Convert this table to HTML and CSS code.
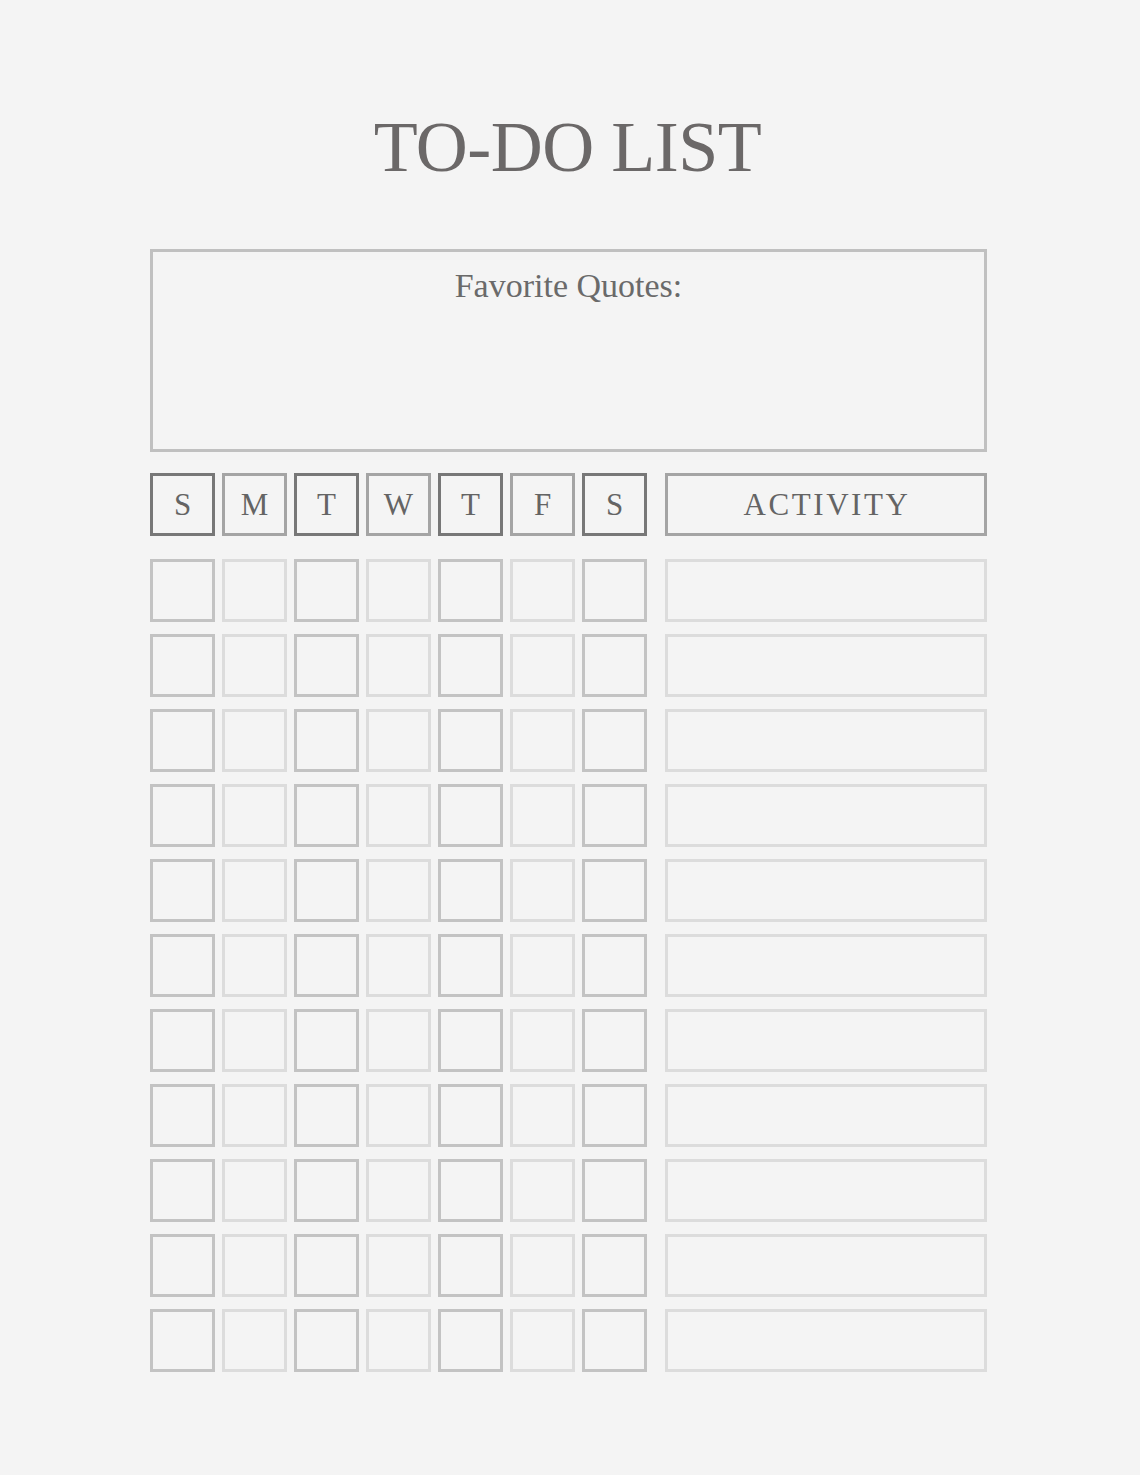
FILE: index.html
```html
<!DOCTYPE html>
<html lang="en">
<head>
<meta charset="utf-8">
<title>To-Do List</title>
<link rel="stylesheet" href="styles.css">
</head>
<body>
<main class="page">
  <h1 class="title">TO-DO LIST</h1>
  <section class="quotes">
    <h2 class="quotes-label">Favorite Quotes:</h2>
  </section>
  <div class="grid header">
    <div class="cell day dark">S</div>
    <div class="cell day mid">M</div>
    <div class="cell day dark">T</div>
    <div class="cell day mid">W</div>
    <div class="cell day dark">T</div>
    <div class="cell day mid">F</div>
    <div class="cell day dark">S</div>
    <div class="cell activity mid">ACTIVITY</div>
  </div>
  <div class="rows">
    <div class="grid row"><div class="cell a"></div><div class="cell b"></div><div class="cell a"></div><div class="cell b"></div><div class="cell a"></div><div class="cell b"></div><div class="cell a"></div><div class="cell activity b"></div></div>
    <div class="grid row"><div class="cell a"></div><div class="cell b"></div><div class="cell a"></div><div class="cell b"></div><div class="cell a"></div><div class="cell b"></div><div class="cell a"></div><div class="cell activity b"></div></div>
    <div class="grid row"><div class="cell a"></div><div class="cell b"></div><div class="cell a"></div><div class="cell b"></div><div class="cell a"></div><div class="cell b"></div><div class="cell a"></div><div class="cell activity b"></div></div>
    <div class="grid row"><div class="cell a"></div><div class="cell b"></div><div class="cell a"></div><div class="cell b"></div><div class="cell a"></div><div class="cell b"></div><div class="cell a"></div><div class="cell activity b"></div></div>
    <div class="grid row"><div class="cell a"></div><div class="cell b"></div><div class="cell a"></div><div class="cell b"></div><div class="cell a"></div><div class="cell b"></div><div class="cell a"></div><div class="cell activity b"></div></div>
    <div class="grid row"><div class="cell a"></div><div class="cell b"></div><div class="cell a"></div><div class="cell b"></div><div class="cell a"></div><div class="cell b"></div><div class="cell a"></div><div class="cell activity b"></div></div>
    <div class="grid row"><div class="cell a"></div><div class="cell b"></div><div class="cell a"></div><div class="cell b"></div><div class="cell a"></div><div class="cell b"></div><div class="cell a"></div><div class="cell activity b"></div></div>
    <div class="grid row"><div class="cell a"></div><div class="cell b"></div><div class="cell a"></div><div class="cell b"></div><div class="cell a"></div><div class="cell b"></div><div class="cell a"></div><div class="cell activity b"></div></div>
    <div class="grid row"><div class="cell a"></div><div class="cell b"></div><div class="cell a"></div><div class="cell b"></div><div class="cell a"></div><div class="cell b"></div><div class="cell a"></div><div class="cell activity b"></div></div>
    <div class="grid row"><div class="cell a"></div><div class="cell b"></div><div class="cell a"></div><div class="cell b"></div><div class="cell a"></div><div class="cell b"></div><div class="cell a"></div><div class="cell activity b"></div></div>
    <div class="grid row"><div class="cell a"></div><div class="cell b"></div><div class="cell a"></div><div class="cell b"></div><div class="cell a"></div><div class="cell b"></div><div class="cell a"></div><div class="cell activity b"></div></div>
  </div>
</main>
</body>
</html>
```

FILE: styles.css
```css
html, body {
  margin: 0;
  padding: 0;
  background: #f4f4f4;
}

body {
  font-family: "Liberation Serif", "Times New Roman", serif;
  color: #666666;
}

.page {
  width: 837px;
  margin-left: 150px;
  padding-top: 111px;
  padding-bottom: 40px;
}

.title {
  margin: 0;
  font-size: 72px;
  line-height: 72px;
  font-weight: normal;
  color: #6b6868;
  text-align: center;
  letter-spacing: -0.5px;
  padding-right: 2px;
}

.quotes {
  margin-top: 66px;
  height: 197px;
  border: 3px solid #c0c0c0;
  padding-top: 17px;
  box-sizing: border-box;
  height: 203px;
}

.quotes-label {
  margin: 0;
  font-size: 34px;
  line-height: 34px;
  font-weight: normal;
  text-align: center;
  color: #6a6a6a;
}

.grid {
  display: grid;
  grid-template-columns: repeat(7, 65px) 333px;
  column-gap: 7px;
}

.header {
  margin-top: 21px;
  height: 63px;
}

.rows {
  margin-top: 23px;
  display: flex;
  flex-direction: column;
  gap: 12px;
}

.row {
  height: 63px;
}

.cell {
  box-sizing: border-box;
  border: 3px solid #c4c4c4;
  height: 100%;
}

.cell.activity {
  margin-left: 11px;
}

.day, .header .activity {
  display: flex;
  align-items: center;
  justify-content: center;
  font-size: 31px;
  line-height: 31px;
  color: #646464;
}

.header .activity {
  letter-spacing: 2.6px;
  padding-left: 2px;
}

.dark {
  border-color: #777777;
}

.mid {
  border-color: #a4a4a4;
}

.a {
  border-color: #c3c3c3;
}

.b {
  border-color: #dcdcdc;
}
```
